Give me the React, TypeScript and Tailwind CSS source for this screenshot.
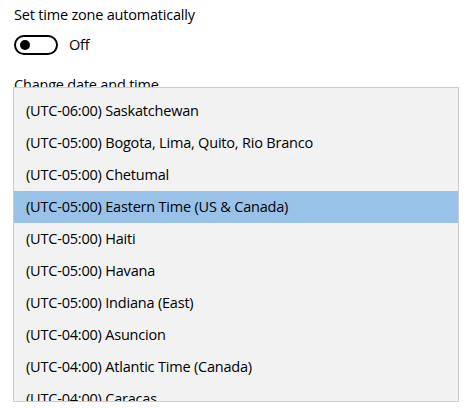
import React from "react";

const zones = [
  "(UTC-06:00) Saskatchewan",
  "(UTC-05:00) Bogota, Lima, Quito, Rio Branco",
  "(UTC-05:00) Chetumal",
  "(UTC-05:00) Eastern Time (US & Canada)",
  "(UTC-05:00) Haiti",
  "(UTC-05:00) Havana",
  "(UTC-05:00) Indiana (East)",
  "(UTC-04:00) Asuncion",
  "(UTC-04:00) Atlantic Time (Canada)",
  "(UTC-04:00) Caracas",
];

export default function App() {
  return (
    <div
      className="relative w-[474px] h-[408px] overflow-hidden bg-white text-black tracking-[-0.2px]"
      style={{ fontFamily: '"Segoe UI", "Open Sans", sans-serif' }}
    >
      <div className="pl-[14px] pt-[4px]">
        <div className="text-[14.5px] leading-[22px]">Set time zone automatically</div>
        <div className="mt-[9px] flex items-center">
          <div className="w-[44px] h-[20px] rounded-full border-2 border-black flex items-center pl-[4px]">
            <div className="w-[10px] h-[10px] rounded-full bg-black" />
          </div>
          <span className="ml-[11px] text-[14.5px] leading-[20px]">Off</span>
        </div>
        <div className="mt-[19px] text-[14.5px] leading-[22px]">Change date and time</div>
      </div>
      <div className="absolute left-[13px] top-[87px] w-[446px] h-[315px] border border-[#cccccc] bg-[#f2f2f2] overflow-hidden pt-[7px]">
        {zones.map((z, i) => (
          <div
            key={z}
            className={
              "h-[32px] flex items-center pl-[12px] text-[14.5px] whitespace-nowrap " +
              (i === 3 ? "bg-[#99c2e8]" : "")
            }
          >
            {z}
          </div>
        ))}
      </div>
    </div>
  );
}
